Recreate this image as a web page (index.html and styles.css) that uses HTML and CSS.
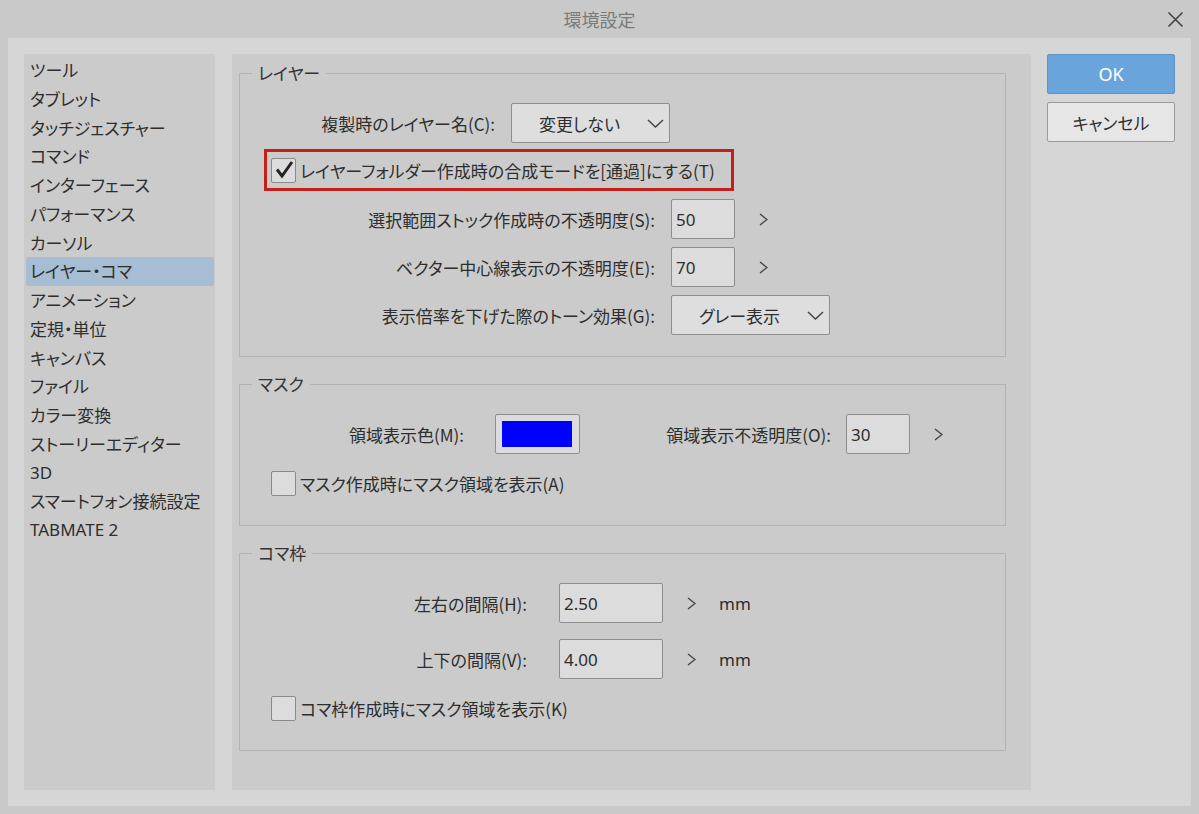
FILE: index.html
```html
<!DOCTYPE html>
<html lang="ja">
<head>
  <meta charset="UTF-8">
  <meta name="viewport" content="width=device-width, initial-scale=1.0">
  <title>環境設定</title>
  <link rel="stylesheet" href="styles.css">
</head>
<body>
  <!-- タイトルバー -->
  <div class="titlebar">
    <span></span>
    <div class="title">環境設定</div>
    <button class="close" aria-label="閉じる">
      <svg width="17" height="17" viewBox="0 0 17 17"><path d="M1.5 1.5 L15.5 15.5 M15.5 1.5 L1.5 15.5" stroke="#444" stroke-width="1.6" fill="none"/></svg>
    </button>
  </div>

  <div class="dialog">
    <!-- カテゴリ一覧 -->
    <ul class="sidebar">
      <li>ツール</li>
      <li>タブレット</li>
      <li>タッチジェスチャー</li>
      <li>コマンド</li>
      <li>インターフェース</li>
      <li>パフォーマンス</li>
      <li>カーソル</li>
      <li class="active">レイヤー・コマ</li>
      <li>アニメーション</li>
      <li>定規・単位</li>
      <li>キャンバス</li>
      <li>ファイル</li>
      <li>カラー変換</li>
      <li>ストーリーエディター</li>
      <li class="latin">3D</li>
      <li>スマートフォン接続設定</li>
      <li class="latin">TABMATE 2</li>
    </ul>

    <div class="main">
      <!-- レイヤー -->
      <fieldset class="group">
        <legend>レイヤー</legend>
        <div class="row">
          <label class="label w-name">複製時のレイヤー名(C):</label>
          <div class="select w-select">
            <span>変更しない</span>
            <svg width="17" height="9" viewBox="0 0 17 9"><path d="M1 1 L8.5 8 L16 1" stroke="#444" stroke-width="1.5" fill="none"/></svg>
          </div>
        </div>
        <div class="cb-row highlight">
          <span class="checkbox checked">
            <svg width="23" height="23" viewBox="0 0 23 23"><path d="M5 10.5 L10 17 L20 3" stroke="#222" stroke-width="3" fill="none" stroke-linejoin="miter"/></svg>
          </span>
          <span>レイヤーフォルダー作成時の合成モードを[通過]にする(T)</span>
        </div>
        <div class="row">
          <label class="label w-long">選択範囲ストック作成時の不透明度(S):</label>
          <div class="num">50</div>
          <svg class="arrow" width="9" height="13" viewBox="0 0 9 13"><path d="M1 1 L8 6.5 L1 12" stroke="#444" stroke-width="1.4" fill="none"/></svg>
        </div>
        <div class="row">
          <label class="label w-long">ベクター中心線表示の不透明度(E):</label>
          <div class="num">70</div>
          <svg class="arrow" width="9" height="13" viewBox="0 0 9 13"><path d="M1 1 L8 6.5 L1 12" stroke="#444" stroke-width="1.4" fill="none"/></svg>
        </div>
        <div class="row">
          <label class="label w-long">表示倍率を下げた際のトーン効果(G):</label>
          <div class="select w-select">
            <span>グレー表示</span>
            <svg width="17" height="9" viewBox="0 0 17 9"><path d="M1 1 L8.5 8 L16 1" stroke="#444" stroke-width="1.5" fill="none"/></svg>
          </div>
        </div>
      </fieldset>

      <!-- マスク -->
      <fieldset class="group">
        <legend>マスク</legend>
        <div class="row">
          <label class="label w-color">領域表示色(M):</label>
          <div class="swatch"><span></span></div>
          <label class="label w-opacity">領域表示不透明度(O):</label>
          <div class="num">30</div>
          <svg class="arrow" width="9" height="13" viewBox="0 0 9 13"><path d="M1 1 L8 6.5 L1 12" stroke="#444" stroke-width="1.4" fill="none"/></svg>
        </div>
        <div class="cb-row">
          <span class="checkbox"></span>
          <span>マスク作成時にマスク領域を表示(A)</span>
        </div>
      </fieldset>

      <!-- コマ枠 -->
      <fieldset class="group koma">
        <legend>コマ枠</legend>
        <div class="row">
          <label class="label w-koma">左右の間隔(H):</label>
          <div class="num wide">2.50</div>
          <svg class="arrow" width="9" height="13" viewBox="0 0 9 13"><path d="M1 1 L8 6.5 L1 12" stroke="#444" stroke-width="1.4" fill="none"/></svg>
          <span class="unit">mm</span>
        </div>
        <div class="row">
          <label class="label w-koma">上下の間隔(V):</label>
          <div class="num wide">4.00</div>
          <svg class="arrow" width="9" height="13" viewBox="0 0 9 13"><path d="M1 1 L8 6.5 L1 12" stroke="#444" stroke-width="1.4" fill="none"/></svg>
          <span class="unit">mm</span>
        </div>
        <div class="cb-row">
          <span class="checkbox"></span>
          <span>コマ枠作成時にマスク領域を表示(K)</span>
        </div>
      </fieldset>
    </div>

    <!-- ボタン -->
    <div class="buttons">
      <button class="btn ok">OK</button>
      <button class="btn">キャンセル</button>
    </div>
  </div>
</body>
</html>
```

FILE: styles.css
```css
body {
  margin: 0;
  background-color: #c9c9c9;
  font-family: "Noto Sans CJK JP", "Noto Sans", sans-serif;
  font-feature-settings: "palt";
  font-size: 17px;
  color: #2e2e2e;
}

/* タイトルバー */
.titlebar {
  height: 38px;
  display: grid;
  grid-template-columns: 1fr auto 1fr;
  align-items: center;
}

.title {
  color: #7b7b7b;
  font-size: 18px;
  line-height: 20px;
}

.close {
  justify-self: end;
  margin-right: 15px;
  width: 17px;
  height: 17px;
  padding: 0;
  border: none;
  background: none;
  display: flex;
}

.dialog {
  margin: 0 8px;
  height: 768px;
  box-sizing: border-box;
  background-color: #d6d6d6;
  padding: 16px;
  display: flex;
}

/* サイドバー */
.sidebar {
  width: 191px;
  margin: 0;
  padding: 2px 1px 0 2px;
  box-sizing: border-box;
  list-style: none;
  background-color: #cbcbcb;
}

.sidebar li {
  height: 28.75px;
  line-height: 28px;
  padding-left: 4px;
  border-radius: 2px;
  white-space: nowrap;
}

.sidebar li.active {
  background-color: #a6bdd4;
}

.sidebar li.latin {
  font-family: "Noto Sans", sans-serif;
}

/* メイン */
.main {
  width: 799px;
  margin-left: 17px;
  padding: 9px 0 0 7px;
  box-sizing: border-box;
  background-color: #cbcbcb;
}

.group {
  width: 767px;
  box-sizing: border-box;
  margin: 0 0 17px 0;
  padding: 20px 0 21px 0;
  border: 1px solid #b3b3b3;
  display: flex;
  flex-direction: column;
  gap: 8px;
}

.group.koma {
  gap: 16px;
}

.group.koma .cb-row {
  margin-top: -8px;
}

.group legend {
  margin-left: 12px;
  padding: 0 6px;
  line-height: 20px;
  color: #333;
}

.row {
  display: flex;
  align-items: center;
  height: 40px;
}

.label {
  text-align: right;
  box-sizing: border-box;
  white-space: nowrap;
}

.w-name { width: 255px; margin-right: 16px; }
.w-long { width: 415px; margin-right: 16px; }
.w-color { width: 224px; margin-right: 31px; }
.w-opacity { width: 251px; margin-right: 15px; }
.w-koma { width: 287px; margin-right: 32px; }

.select {
  height: 40px;
  box-sizing: border-box;
  display: flex;
  align-items: center;
  background-color: #dedede;
  border: 1px solid #8e8e8e;
  border-radius: 2px;
}

.w-select {
  width: 159px;
}

.select span {
  flex: 1;
  text-align: center;
}

.select svg {
  margin-right: 5px;
}

.num {
  width: 64px;
  height: 40px;
  box-sizing: border-box;
  padding-left: 4px;
  display: flex;
  align-items: center;
  background-color: #dcdcdc;
  border: 1px solid #8e8e8e;
  border-radius: 2px;
  font-family: "Noto Sans", sans-serif;
}

.num.wide {
  width: 104px;
}

.arrow {
  margin-left: 24px;
}

.unit {
  margin-left: 23px;
  font-family: "Noto Sans", sans-serif;
}

.swatch {
  width: 85px;
  height: 40px;
  box-sizing: border-box;
  padding: 6px 7px 6px 6px;
  background-color: #dcdcdc;
  border: 1px solid #8e8e8e;
  border-radius: 2px;
  display: flex;
}

.swatch span {
  flex: 1;
  background-color: #0000ff;
}

/* チェックボックス */
.cb-row {
  margin-left: 24px;
  width: 470px;
  height: 42px;
  box-sizing: border-box;
  border: 3px solid transparent;
  padding-left: 4px;
  display: flex;
  align-items: center;
  gap: 4px;
  white-space: nowrap;
}

.cb-row.highlight {
  border-color: #c41f1a;
  margin-top: -2px;
}

.checkbox {
  width: 25px;
  height: 25px;
  box-sizing: border-box;
  background-color: #dcdcdc;
  border: 1px solid #8a8a8a;
  border-radius: 2px;
  display: flex;
  flex-shrink: 0;
}

/* ボタン */
.buttons {
  width: 128px;
  margin-left: 16px;
  display: flex;
  flex-direction: column;
  gap: 8px;
}

.btn {
  height: 40px;
  background-color: #e6e6e6;
  border: 1px solid #9a9a9a;
  border-radius: 2px;
  font-family: "Noto Sans CJK JP", sans-serif;
  font-feature-settings: "palt";
  font-size: 17px;
  color: #2e2e2e;
}

.btn.ok {
  background-color: #69a5da;
  border-color: #5f93c4;
  color: #fff;
  font-family: "Noto Sans", sans-serif;
  font-size: 18px;
}
```
